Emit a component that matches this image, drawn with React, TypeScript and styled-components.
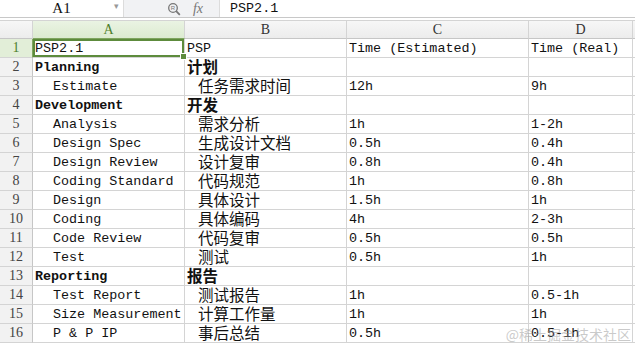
import React from "react";
import styled, { createGlobalStyle } from "styled-components";

type Row = {
  a: string;
  b: string;
  c?: string;
  d?: string;
  bold?: boolean;
  indent?: boolean;
};

const rows: Array<Row> = [
  { a: "PSP2.1", b: "PSP", c: "Time (Estimated)", d: "Time (Real)" },
  { a: "Planning", b: "计划", bold: true },
  { a: "Estimate", b: "任务需求时间", c: "12h", d: "9h", indent: true },
  { a: "Development", b: "开发", bold: true },
  { a: "Analysis", b: "需求分析", c: "1h", d: "1-2h", indent: true },
  { a: "Design Spec", b: "生成设计文档", c: "0.5h", d: "0.4h", indent: true },
  { a: "Design Review", b: "设计复审", c: "0.8h", d: "0.4h", indent: true },
  { a: "Coding Standard", b: "代码规范", c: "1h", d: "0.8h", indent: true },
  { a: "Design", b: "具体设计", c: "1.5h", d: "1h", indent: true },
  { a: "Coding", b: "具体编码", c: "4h", d: "2-3h", indent: true },
  { a: "Code Review", b: "代码复审", c: "0.5h", d: "0.5h", indent: true },
  { a: "Test", b: "测试", c: "0.5h", d: "1h", indent: true },
  { a: "Reporting", b: "报告", bold: true },
  { a: "Test Report", b: "测试报告", c: "1h", d: "0.5-1h", indent: true },
  { a: "Size Measurement", b: "计算工作量", c: "1h", d: "1h", indent: true },
  { a: "P & P IP", b: "事后总结", c: "0.5h", d: "0.5-1h", indent: true },
];

const columns = ["A", "B", "C", "D"];

const App: React.FC = () => {
  return (
    <>
      <GlobalStyle />
      <Sheet>
        <Toolbar>
          <NameBox>
            <span>A1</span>
            <Caret>▾</Caret>
          </NameBox>
          <ToolIcons>
            <svg width="14" height="14" viewBox="0 0 14 14">
              <circle cx="6" cy="6" r="4.3" fill="none" stroke="#777" strokeWidth="1.3" />
              <path d="M9.2 9.2 L12.8 12.8" stroke="#777" strokeWidth="1.8" />
              <text x="6" y="8.2" fontSize="6" textAnchor="middle" fill="#777" fontFamily="Liberation Sans">R</text>
            </svg>
            <Fx>fx</Fx>
          </ToolIcons>
          <Formula>PSP2.1</Formula>
        </Toolbar>
        <Gap />
        <Grid>
          <Corner />
          {columns.map((c) => (
            <ColHead key={c} active={c === "A"}>
              {c}
            </ColHead>
          ))}
          <ColHead active={false} />
          {rows.map((r, i) => (
            <React.Fragment key={i}>
              <RowHead active={i === 0}>{i + 1}</RowHead>
              <Cell bold={r.bold} indent={r.indent ? 18 : 0} selected={i === 0}>
                {r.a}
              </Cell>
              <Cell bold={r.bold} indent={r.indent ? 11 : 0} cjk={i > 0}>
                {r.b}
              </Cell>
              <Cell>{r.c}</Cell>
              <Cell>{r.d}</Cell>
              <Cell />
            </React.Fragment>
          ))}
        </Grid>
        <Watermark>@稀土掘金技术社区</Watermark>
      </Sheet>
    </>
  );
};

export default App;

const GlobalStyle = createGlobalStyle`
  body {
    margin: 0;
    background: #fff;
    overflow: hidden;
  }
`;

const Sheet = styled.div`
  position: relative;
  width: 635px;
  height: 346px;
  overflow: hidden;
  font-family: "Liberation Mono", "Noto Sans CJK SC", monospace;
  color: #111;
`;

const Toolbar = styled.div`
  display: flex;
  height: 17px;
  border-bottom: 1px solid #c8c8c8;
  font-family: "Liberation Serif", "Noto Sans CJK SC", serif;
  font-size: 15px;
`;

const NameBox = styled.div`
  width: 123px;
  display: flex;
  align-items: center;
  justify-content: center;
  position: relative;
  background: #fff;
  border-right: 1px solid #dcdcdc;
`;

const Caret = styled.span`
  position: absolute;
  right: 4px;
  top: 1px;
  font-size: 9px;
  color: #999;
`;

const ToolIcons = styled.div`
  width: 96px;
  display: flex;
  align-items: center;
  justify-content: flex-end;
  gap: 12px;
  padding-right: 16px;
  box-sizing: border-box;
  background: #f1f2f4;
  border-right: 1px solid #dcdcdc;
`;

const Fx = styled.span`
  font-style: italic;
  color: #777;
  font-size: 14px;
`;

const Formula = styled.div`
  flex: 1;
  display: flex;
  align-items: center;
  padding-left: 10px;
  font-family: "Liberation Mono", monospace;
  font-size: 13.4px;
  background: #fff;
`;

const Gap = styled.div`
  height: 2px;
  background: #fff;
`;

const Grid = styled.div`
  display: grid;
  grid-template-columns: 33px 152px 162px 182px 104px 1fr;
  grid-auto-rows: 19px;
`;

const Corner = styled.div`
  background: linear-gradient(#f7f7f7, #ececec);
  border-right: 1px solid #d4d4d4;
  border-bottom: 1px solid #c6c6c6;
  border-top: 1px solid #d4d4d4;
`;

const ColHead = styled.div<{ active: boolean }>`
  box-sizing: border-box;
  display: flex;
  align-items: center;
  justify-content: center;
  font-family: "Liberation Serif", serif;
  font-size: 14px;
  border-top: 1px solid #d4d4d4;
  border-right: 1px solid #d4d4d4;
  border-bottom: 1px solid ${(p) => (p.active ? "#7fa55f" : "#c6c6c6")};
  background: ${(p) =>
    p.active ? "linear-gradient(#eaf3e3, #dcebd0)" : "linear-gradient(#f7f7f7, #ececec)"};
  color: ${(p) => (p.active ? "#4f7f2c" : "#333")};
`;

const RowHead = styled.div<{ active: boolean }>`
  box-sizing: border-box;
  display: flex;
  align-items: center;
  justify-content: center;
  font-family: "Liberation Serif", serif;
  font-size: 14px;
  border-right: 1px solid ${(p) => (p.active ? "#7fa55f" : "#c6c6c6")};
  border-bottom: 1px solid #d4d4d4;
  background: ${(p) => (p.active ? "#e2eed8" : "#f2f2f2")};
  color: ${(p) => (p.active ? "#4f7f2c" : "#444")};
`;

const Cell = styled.div<{ bold?: boolean; indent?: number; selected?: boolean; cjk?: boolean }>`
  position: relative;
  box-sizing: border-box;
  display: flex;
  align-items: center;
  white-space: pre;
  line-height: 1;
  padding-left: ${(p) => 2 + (p.indent || 0)}px;
  padding-top: ${(p) => (p.cjk ? "5px" : "1px")};
  font-size: ${(p) => (p.cjk ? "15.5px" : "13.4px")};
  font-weight: ${(p) => (p.bold ? 700 : 400)};
  border-right: 1px solid #d4d4d4;
  border-bottom: 1px solid #d4d4d4;
  ${(p) =>
    p.selected &&
    `
    box-shadow: inset 0 0 0 2px #5d8b3c;
    &::after {
      content: "";
      position: absolute;
      right: -3px;
      bottom: -3px;
      width: 5px;
      height: 5px;
      background: #5d8b3c;
      border: 1px solid #fff;
      z-index: 2;
    }
  `}
`;

const Watermark = styled.div`
  position: absolute;
  right: 4px;
  bottom: 2px;
  font-family: "Noto Sans CJK SC", sans-serif;
  font-size: 14px;
  color: rgba(150, 150, 150, 0.5);
  pointer-events: none;
`;
